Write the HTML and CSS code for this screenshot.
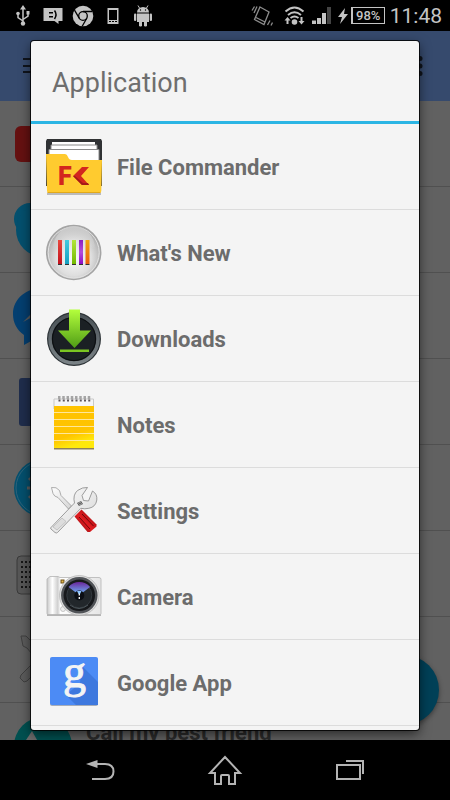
FILE: index.html
```html
<!DOCTYPE html>
<html lang="en">
<head>
    <meta charset="UTF-8">
    <meta name="viewport" content="width=device-width, initial-scale=1.0">
    <title>Application</title>
    <link rel="stylesheet" href="styles.css">
</head>
<body>

    <!-- Status Bar -->
    <div class="status-bar">
        <div class="status-group notifications">
            <!-- USB -->
            <svg class="status-icon" viewBox="0 0 22 22" fill="none" stroke="#c4c4c4" stroke-width="1.5">
                <path d="M11 3v15M6 9v3.500l5 3.500M16 8v3l-5 3.500"/>
                <path d="M11 0l-3 4.500h6zM14.500 6h3v3.500h-3z" fill="#c4c4c4" stroke="none"/>
                <circle cx="6" cy="8.500" r="1.800" fill="#c4c4c4" stroke="none"/>
                <circle cx="11" cy="18.500" r="2.200" fill="#c4c4c4" stroke="none"/>
            </svg>
            <!-- Chat bubble -->
            <svg class="status-icon" viewBox="0 0 22 22">
                <path d="M1.500 3h19v13h-4v3l-4-3h-11z" fill="#c4c4c4"/>
                <path d="M7 7h4v1.500H7zM7 11h4v1.500H7z" fill="#000"/>
                <path d="M12.500 5.500q3 4 0 8.500" fill="none" stroke="#000" stroke-width="1.500"/>
            </svg>
            <!-- Browser -->
            <svg class="status-icon" viewBox="0 0 22 22">
                <circle cx="11" cy="11" r="10.300" fill="#c4c4c4"/>
                <circle cx="11" cy="11" r="4.300" fill="#c4c4c4" stroke="#000" stroke-width="1.300"/>
                <path d="M11 6.500h9.200M7.200 13.200L2.500 5.200M14.800 13.200l-4.600 8" stroke="#000" stroke-width="1.300"/>
            </svg>
            <!-- Phone -->
            <svg class="status-icon" viewBox="0 0 22 22">
                <path d="M5.500 3h11v16h-11zM7 5v10h8V5z" fill="#c4c4c4" fill-rule="evenodd"/>
                <path d="M7 16.500h2M10 16.500h2M13 16.500h2" stroke="#000"/>
            </svg>
            <!-- Android -->
            <svg class="status-icon" viewBox="0 0 22 22" fill="#c4c4c4">
                <path d="M5 7.500a6 5.500 0 0 1 12 0zM5 8.500h12v8.500H5z"/>
                <rect x="2" y="8.500" width="2.300" height="7.500" rx="1.100"/>
                <rect x="17.700" y="8.500" width="2.300" height="7.500" rx="1.100"/>
                <rect x="7" y="15" width="3" height="6.500" rx="1.200"/>
                <rect x="12" y="15" width="3" height="6.500" rx="1.200"/>
                <path d="M7.500 3L6 0.500M14.500 3L16 0.500" stroke="#c4c4c4"/>
                <circle cx="8.500" cy="5" r="0.700" fill="#000"/>
                <circle cx="13.500" cy="5" r="0.700" fill="#000"/>
            </svg>
        </div>
        <div class="status-group system">
            <!-- Vibrate -->
            <svg class="status-icon vibrate" viewBox="0 0 22 22" fill="none" stroke="#8c8c8c" stroke-width="1.300">
                <path d="M9 2l9 5-5 12.500-9.500-5zM5 12.500l9 4.500"/>
                <path d="M3.500 1.500L1 5.500M6 1.500L3 8M16.500 20l2.500-4.500M20 20.500l1.500-3"/>
            </svg>
            <!-- Wi-Fi -->
            <svg class="status-icon" viewBox="0 0 22 22" fill="none" stroke="#c4c4c4" stroke-width="1.900">
                <path d="M2.500 6.500q9-8 18 0M5 10q6.500-5.500 13 0M7.500 13q4-3 8 0"/>
                <circle cx="11.500" cy="17" r="2.800" fill="#c4c4c4" stroke="none"/>
                <path d="M4.500 12l-3 3.500h2V19h2v-3.500h2zM18.500 19.500l3-3.500h-2v-4h-2v4h-2z" fill="#c4c4c4" stroke="none"/>
            </svg>
            <!-- Signal -->
            <svg class="status-icon" viewBox="0 0 22 22" fill="#c4c4c4">
                <path d="M2 15.500h4V19H2zM7 13h4v6H7zM12 8h4v11h-4z"/>
                <path d="M17 2h4v17h-4z" fill="#444"/>
            </svg>
            <div class="battery">
                <svg class="bolt" viewBox="0 0 12 18">
                    <path d="M8 1L1 10h4l-2 7 8-10H7z" fill="#c4c4c4"/>
                </svg>
                <span class="battery-level">98%</span>
            </div>
            <span class="clock">11:48</span>
        </div>
    </div>

    <div class="screen">
        <!-- App behind the dialog -->
        <div class="app">
            <div class="app-header">
                <svg class="menu-icon" viewBox="0 0 22 18" stroke="#10141c" stroke-width="2">
                    <path d="M0 2h22M0 9h22M0 15h22"/>
                </svg>
                <svg class="more-icon" viewBox="0 0 6 20" fill="#10141c">
                    <circle cx="3" cy="2.500" r="2.500"/><circle cx="3" cy="10" r="2.500"/><circle cx="3" cy="17.500" r="2.500"/>
                </svg>
            </div>
            <div class="app-list">
                <div class="app-row">
                    <svg class="app-icon" viewBox="0 0 60 60"><rect x="2" y="12" width="56" height="36" rx="6" fill="#651111"/></svg>
                </div>
                <div class="app-row">
                    <svg class="app-icon" viewBox="0 0 60 60" fill="#04506e"><circle cx="17" cy="19" r="16"/><circle cx="30" cy="30" r="27"/></svg>
                </div>
                <div class="app-row">
                    <svg class="app-icon" viewBox="0 0 60 60">
                        <path d="M30 2C14 2 0 12 0 28c0 9 4 16 11 21v10l9-5c25 5 40-10 40-26S46 2 30 2z" fill="#043f70"/>
                        <path d="M10 36l15-15 8 8 15-8-15 15-8-8z" fill="#5b5b5b"/>
                    </svg>
                </div>
                <div class="app-row">
                    <svg class="app-icon" viewBox="0 0 60 60"><rect x="6" y="6" width="48" height="48" rx="3" fill="#1f2d4c"/></svg>
                </div>
                <div class="app-row">
                    <svg class="app-icon" viewBox="0 0 60 60" fill="none">
                        <circle cx="30" cy="30" r="29" fill="#04506e"/>
                        <circle cx="30" cy="30" r="27" stroke="#2d6279"/>
                        <path d="M16 22q14-14 28 0M14 30h32M16 38q14 14 28 0" stroke="#5b5b5b" stroke-width="3"/>
                    </svg>
                </div>
                <div class="app-row">
                    <svg class="app-icon" viewBox="0 0 60 60" fill="none">
                        <rect x="4" y="12" width="52" height="38" rx="4" fill="#575757" stroke="#3a3a3a"/>
                        <path d="M8 18h46M8 23h46M8 28h46M8 33h46M8 38h46M8 43h46" stroke="#151515" stroke-width="2" stroke-dasharray="2 2"/>
                    </svg>
                </div>
                <div class="app-row">
                    <svg class="app-icon" viewBox="0 0 60 60" fill="#5b5b5b" stroke="#404040">
                        <path d="M8 6l5 0 5 5v5l10 10-4 4L14 18l-4-2zM8 45l20-20 6 6-20 20-3 1-4-4z"/>
                    </svg>
                </div>
                <div class="app-row contact-row">
                    <svg class="app-icon" viewBox="0 0 60 60">
                        <circle cx="30" cy="30" r="29" fill="#005050"/>
                        <path d="M13 24l6-9 9 16z" fill="#6b6b6b"/>
                    </svg>
                    <span class="app-label">Call my best friend</span>
                </div>
            </div>
            <div class="fab"></div>
        </div>

        <!-- Application chooser -->
        <div class="dialog" role="dialog" aria-labelledby="dialog-title">
            <h1 class="dialog-title" id="dialog-title">Application</h1>
            <ul class="choices">
                <li>
                    <button class="choice">
                        <svg class="choice-icon" viewBox="0 0 60 60">
                            <path d="M3 56h54v2H3z" fill="#bbb"/>
                            <path d="M3 2h54l1 2v45H2V4z" fill="#303234"/>
                            <path d="M8 5h43v5H8z" fill="#fff"/>
                            <path d="M7 8h46v6H7z" fill="#fff" stroke="#8a8a8a"/>
                            <path d="M5 12.500h50V27H5z" fill="#fff" stroke="#8a8a8a"/>
                            <path d="M2 17h19q2 0 3 3t4 3h30l-.7 31q0 2-2 2H5q-2 0-2-2z" fill="#ffcb2f"/>
                            <path d="M3.500 55.500h53" stroke="#e1a91b"/>
                            <text class="folder-mark" x="14" y="48">F</text>
                            <path d="M38 30h7l-8 9 8 9h-7l-9-9z" fill="#d3261e"/>
                            <path d="M29 39l9 9h7l-1-2h-5l-8-7z" fill="#a51b18"/>
                        </svg>
                        <span>File Commander</span>
                    </button>
                </li>
                <li>
                    <button class="choice">
                        <svg class="choice-icon" viewBox="0 0 60 60">
                            <defs>
                                <radialGradient id="disc" cx=".5" cy=".6" r=".55">
                                    <stop offset="0" stop-color="#fafafa"/><stop offset=".6" stop-color="#dedede"/><stop offset="1" stop-color="#adadad"/>
                                </radialGradient>
                                <linearGradient id="gloss" x1="0" y1="0" x2="0" y2="1">
                                    <stop offset="0" stop-color="#c8c8c8"/><stop offset="1" stop-color="#f4f4f4" stop-opacity="0"/>
                                </linearGradient>
                                <linearGradient id="red" x1="0" y1="0" x2="0" y2="1"><stop offset="0" stop-color="#e8493f"/><stop offset="1" stop-color="#c3121d"/></linearGradient>
                                <linearGradient id="cyan" x1="0" y1="0" x2="0" y2="1"><stop offset="0" stop-color="#43cbe0"/><stop offset="1" stop-color="#159fc0"/></linearGradient>
                                <linearGradient id="lime" x1="0" y1="0" x2="0" y2="1"><stop offset="0" stop-color="#b2e63b"/><stop offset="1" stop-color="#74b900"/></linearGradient>
                                <linearGradient id="violet" x1="0" y1="0" x2="0" y2="1"><stop offset="0" stop-color="#8b1cc0"/><stop offset=".5" stop-color="#b44bdc"/><stop offset="1" stop-color="#8d0cc5"/></linearGradient>
                                <linearGradient id="orange" x1="0" y1="0" x2="0" y2="1"><stop offset="0" stop-color="#f1a70e"/><stop offset="1" stop-color="#ee5f0a"/></linearGradient>
                            </defs>
                            <circle cx="29.700" cy="29.500" r="27" fill="url(#disc)" stroke="#a4a4a4" stroke-width="1.500"/>
                            <circle cx="29.700" cy="29.500" r="25.500" fill="none" stroke="#e2e2e2"/>
                            <path d="M9 26a21 23 0 0 1 42 0q-21-12-42 0z" fill="url(#gloss)"/>
                            <path d="M14 17h4v24h-4z" fill="url(#red)"/>
                            <path d="M21 17h4v24h-4z" fill="url(#cyan)"/>
                            <path d="M28 17h4v24h-4z" fill="url(#lime)"/>
                            <path d="M35 17h4v24h-4z" fill="url(#violet)"/>
                            <path d="M41.500 17h4v24h-4z" fill="url(#orange)"/>
                            <path d="M14 41.500h4M21 41.500h4M28 41.500h4M35 41.500h4M41.500 41.500h4" stroke="#333"/>
                        </svg>
                        <span>What's New</span>
                    </button>
                </li>
                <li>
                    <button class="choice">
                        <svg class="choice-icon" viewBox="0 0 60 60">
                            <defs>
                                <linearGradient id="rim" x1="0" y1="0" x2="0" y2="1"><stop offset="0" stop-color="#4a5257"/><stop offset="1" stop-color="#7a8286"/></linearGradient>
                                <linearGradient id="arrow" x1="0" y1="0" x2="0" y2="1"><stop offset="0" stop-color="#b4ff3c"/><stop offset="1" stop-color="#4f9c16"/></linearGradient>
                            </defs>
                            <circle cx="30" cy="30" r="27" fill="#2d3337"/>
                            <circle cx="30" cy="30" r="24" fill="#1b2024" stroke="url(#rim)" stroke-width="3.500"/>
                            <circle cx="30" cy="30" r="21.500" fill="none" stroke="#0b0e10"/>
                            <path d="M25 0.500h11v21h11L30.500 39 14 21.500h11z" fill="url(#arrow)"/>
                            <path d="M16 40.500h29v2.500H16z" fill="#7bc522"/>
                        </svg>
                        <span>Downloads</span>
                    </button>
                </li>
                <li>
                    <button class="choice">
                        <svg class="choice-icon" viewBox="0 0 60 60">
                            <defs>
                                <linearGradient id="page" x1="0" y1="0" x2=".3" y2="1"><stop offset="0" stop-color="#ffc200"/><stop offset=".75" stop-color="#ffc400"/><stop offset="1" stop-color="#ffe80c"/></linearGradient>
                            </defs>
                            <path d="M10 51h40v3.500H10z" fill="#8d8058"/>
                            <path d="M10 4h39.500v10H10z" fill="#f5f5f5" stroke="#c9c9c9"/>
                            <path d="M10 11h40v42H10z" fill="url(#page)"/>
                            <path d="M10 17.500h40M10 24.500h40M10 31.500h40M10 38.500h40M10 45.500h40" stroke="#ffe79a"/>
                            <path d="M14 2.500h33" stroke="#a5a5a5" stroke-width="3" stroke-dasharray="2.500 1.750"/>
                            <path d="M14.500 5.500h33" stroke="#5c5459" stroke-width="2" stroke-dasharray="2 2.250"/>
                        </svg>
                        <span>Notes</span>
                    </button>
                </li>
                <li>
                    <button class="choice">
                        <svg class="choice-icon" viewBox="0 0 60 60">
                            <defs>
                                <linearGradient id="steel" x1="0" y1="0" x2="1" y2="1"><stop offset="0" stop-color="#fff"/><stop offset="1" stop-color="#d4d4d4"/></linearGradient>
                                <linearGradient id="grip" x1="0" y1="1" x2="1" y2="0"><stop offset="0" stop-color="#5f0709"/><stop offset=".45" stop-color="#e31c20"/><stop offset="1" stop-color="#8a0a0d"/></linearGradient>
                            </defs>
                            <path d="M7.500 6.500q5-1 8 3l1.500 5 10.500 10.500-3 3L14 16.500q-4-1-5-4z" fill="url(#steel)" stroke="#9a9a9a" stroke-width=".8"/>
                            <path d="M30.500 35.500l7-7L52.500 43.500v2L46 51h-2.500z" fill="url(#grip)"/>
                            <path d="M35 36l11 12M38 33l11.500 12" stroke="#6d0709"/>
                            <path d="M6.500 47l24-25q-2-8 3-12.500 5-3.500 10-3l-5.500 8 1.500 5 5 .5 4-10q5 3 4.300 9-1 7-8 8.300-4 1-8 0L13.500 51.500q-1 1-2.500 0l-4-3.500z" fill="url(#steel)" stroke="#929292" stroke-width=".9"/>
                            <path d="M9 46l9-9 4 3.500-9 8.500z" fill="#ddd" stroke="#bbb" stroke-width=".8"/>
                            <path d="M33 22l4-2 2 3-4 2z" fill="#555"/>
                            <path d="M34 22.500l3-1.500M35 24l3-1.500" stroke="#ddd" stroke-width=".6"/>
                        </svg>
                        <span>Settings</span>
                    </button>
                </li>
                <li>
                    <button class="choice">
                        <svg class="choice-icon" viewBox="0 0 60 60">
                            <defs>
                                <linearGradient id="case" x1="0" y1="0" x2="1" y2="0"><stop offset="0" stop-color="#c8c8c8"/><stop offset=".1" stop-color="#fff"/><stop offset=".2" stop-color="#cfcfcf"/><stop offset=".25" stop-color="#fff"/><stop offset="1" stop-color="#e6e6e6"/></linearGradient>
                                <linearGradient id="flare" x1="0" y1="0" x2="0" y2="1"><stop offset="0" stop-color="#6a259b"/><stop offset="1" stop-color="#6da9f0"/></linearGradient>
                            </defs>
                            <path d="M3 47h54v2H3z" fill="#b5b5b5"/>
                            <path d="M3 12l3-2.500h8l2 1h39q2 0 2 2v34q0 1-1 1H4q-1 0-1-1z" fill="url(#case)" stroke="#b4b4b4" stroke-width=".8"/>
                            <rect x="16.500" y="12.500" width="4" height="4" fill="#6b4c12"/>
                            <rect x="17.500" y="13.500" width="2" height="2" fill="#e2b64a"/>
                            <circle cx="19" cy="42" r="2.500" fill="#eee" stroke="#aaa" stroke-width=".6"/>
                            <circle cx="35.300" cy="28.300" r="19.800" fill="#ddd" stroke="#aaa" stroke-width=".6"/>
                            <circle cx="35.300" cy="28.300" r="17" fill="#17191c" stroke="#505357" stroke-width="2.500"/>
                            <circle cx="35.300" cy="28.300" r="12.500" fill="#22272b" stroke="#33393e"/>
                            <path d="M24.500 20a14 14 0 0 1 21.600 0l-8 6q-3-2-5.600 0z" fill="url(#flare)"/>
                            <circle cx="35.300" cy="28.500" r="5" fill="#0b0e14"/>
                            <path d="M33 24h4.500l-1.500 3h-1.500z" fill="#8cc5ff"/>
                            <path d="M35.300 26.500v6" stroke="#fff" stroke-width="1.300" stroke-dasharray="2 1.500"/>
                            <path d="M26 38q9 7 18 0" fill="none" stroke="#4c565b"/>
                        </svg>
                        <span>Camera</span>
                    </button>
                </li>
                <li>
                    <button class="choice">
                        <svg class="choice-icon" viewBox="0 0 60 60">
                            <rect x="6" y="5" width="48" height="48" rx="2" fill="#a7adb8"/>
                            <rect x="6" y="4" width="48" height="48" rx="2" fill="#4c8bf5"/>
                            <path d="M38 13l16 16v23H32L22 42l14-12z" fill="#3e78de"/>
                            <text class="g-mark" x="19" y="34">g</text>
                        </svg>
                        <span>Google App</span>
                    </button>
                </li>
            </ul>
        </div>
    </div>

    <!-- Navigation Bar -->
    <nav class="nav-bar">
        <button class="nav-button" aria-label="Back">
            <svg class="nav-icon" viewBox="0 0 36 32" fill="none" stroke="#b4b4b4" stroke-width="2">
                <path d="M13 10h10q8.500 0 8.500 7.500T23 25H10"/>
                <path d="M4 10L15.500 6v8z" fill="#b4b4b4" stroke="none"/>
            </svg>
        </button>
        <button class="nav-button" aria-label="Home">
            <svg class="nav-icon" viewBox="0 0 36 32" fill="none" stroke="#b4b4b4" stroke-width="2">
                <path d="M18 3L3 19h5v11h6v-8q0-1 1-1h6q1 0 1 1v8h6V19h5z"/>
            </svg>
        </button>
        <button class="nav-button" aria-label="Recent apps">
            <svg class="nav-icon" viewBox="0 0 36 32" fill="none" stroke="#b4b4b4" stroke-width="2">
                <path d="M5 11h23v14H5zM14 7h17v13"/>
            </svg>
        </button>
    </nav>

</body>
</html>
```

FILE: styles.css
```css
* {
    margin: 0;
    padding: 0;
    box-sizing: border-box;
}

body {
    font-family: Roboto, 'Noto Sans', sans-serif;
    height: 100vh;
    display: flex;
    flex-direction: column;
    background-color: #000;
    overflow: hidden;
}

button {
    font: inherit;
    border: none;
    background: none;
    cursor: pointer;
}

/* Status Bar */
.status-bar {
    height: 31px;
    flex-shrink: 0;
    display: flex;
    justify-content: space-between;
    align-items: center;
    padding: 0 8px 0 12px;
    color: #c4c4c4;
}

.status-group {
    display: flex;
    align-items: center;
}

.notifications {
    gap: 8px;
}

.system {
    gap: 5px;
}

.status-icon {
    width: 22px;
    height: 22px;
}

.vibrate {
    margin-right: 5px;
}

.battery {
    display: flex;
    align-items: center;
    gap: 2px;
}

.bolt {
    width: 12px;
    height: 18px;
}

.battery-level {
    width: 34px;
    height: 17px;
    border: 1px solid #c4c4c4;
    border-left-width: 2px;
    font-size: 13px;
    font-weight: 500;
    line-height: 15px;
    text-align: center;
}

.clock {
    font-size: 21px;
}

/* App behind the dialog */
.screen {
    flex: 1;
    min-height: 0;
    position: relative;
    overflow: hidden;
}

.app {
    height: 100%;
    background-color: #616161;
    overflow: hidden;
}

.app-header {
    height: 70px;
    display: flex;
    justify-content: space-between;
    align-items: center;
    padding: 0 27px 0 23px;
    background-color: #364a6d;
}

.menu-icon {
    width: 22px;
    height: 18px;
}

.more-icon {
    width: 6px;
    height: 20px;
}

.app-row {
    height: 86px;
    display: flex;
    align-items: center;
    gap: 13px;
    padding-left: 13px;
    border-bottom: 1px solid #505050;
}

.app-icon {
    width: 60px;
    height: 60px;
    flex-shrink: 0;
}

.contact-row .app-label {
    align-self: flex-start;
    padding-top: 16px;
}

.app-label {
    font-size: 22px;
    font-weight: 700;
    line-height: 28px;
    color: #2b2b2b;
    white-space: nowrap;
}

.fab {
    position: absolute;
    right: 11px;
    bottom: 15px;
    width: 70px;
    height: 70px;
    border-radius: 50%;
    background-color: #004057;
    box-shadow: 0 2px 5px rgba(0, 0, 0, 0.4);
}

/* Dialog */
.dialog {
    position: absolute;
    inset: 10px 31px;
    background-color: #f4f4f4;
    border-radius: 3px;
    box-shadow: 0 0 0 1px rgba(0, 0, 0, 0.8), 0 4px 12px rgba(0, 0, 0, 0.6);
    overflow: hidden;
}

.dialog-title {
    height: 83px;
    padding: 0 21px;
    border-bottom: 3px solid #2bb5e4;
    font-size: 27px;
    font-weight: 400;
    line-height: 84px;
    color: #6e6e6e;
}

.choices {
    list-style: none;
}

.choice {
    width: 100%;
    height: 86px;
    display: flex;
    align-items: center;
    gap: 13px;
    padding: 0 13px;
    border-bottom: 1px solid #dcdcdc;
    font-size: 22px;
    font-weight: 700;
    line-height: 28px;
    color: #6c6c6c;
    text-align: left;
}

.choice span {
    padding-top: 2px;
}

.choice-icon {
    width: 60px;
    height: 60px;
    flex-shrink: 0;
}

.folder-mark {
    font-family: Roboto, sans-serif;
    font-size: 25px;
    font-weight: 900;
    fill: #d3261e;
}

.g-mark {
    font-family: 'Liberation Serif', serif;
    font-size: 46px;
    font-weight: 400;
    fill: #f4f4f4;
    stroke: #f4f4f4;
    stroke-width: 1px;
}

/* Navigation Bar */
.nav-bar {
    height: 60px;
    flex-shrink: 0;
    display: grid;
    grid-template-columns: repeat(3, 1fr);
    padding: 0 38px;
    background-color: #000;
}

.nav-button {
    display: flex;
    align-items: center;
    justify-content: center;
}

.nav-icon {
    width: 36px;
    height: 32px;
}
```
